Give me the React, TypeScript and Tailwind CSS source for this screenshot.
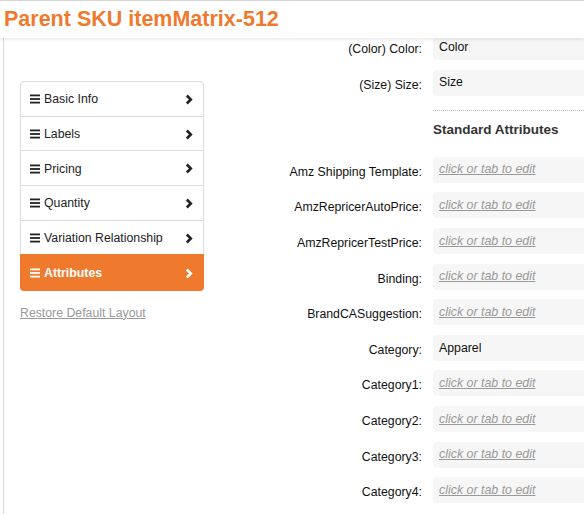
import React from "react";

const ORANGE = "text-[#ef7a2e]";

const NAV = ["Basic Info", "Labels", "Pricing", "Quantity", "Variation Relationship", "Attributes"];

type Field = { label: string; value?: string };

const TOP_FIELDS: Field[] = [
  { label: "(Color) Color:", value: "Color" },
  { label: "(Size) Size:", value: "Size" },
];

const STD_FIELDS: Field[] = [
  { label: "Amz Shipping Template:" },
  { label: "AmzRepricerAutoPrice:" },
  { label: "AmzRepricerTestPrice:" },
  { label: "Binding:" },
  { label: "BrandCASuggestion:" },
  { label: "Category:", value: "Apparel" },
  { label: "Category1:" },
  { label: "Category2:" },
  { label: "Category3:" },
  { label: "Category4:" },
];

function Bars() {
  return (
    <svg width="10" height="10" viewBox="0 0 10 10" className="shrink-0">
      <rect x="0" y="0.5" width="10" height="1.8" fill="currentColor" />
      <rect x="0" y="4.1" width="10" height="1.8" fill="currentColor" />
      <rect x="0" y="7.7" width="10" height="1.8" fill="currentColor" />
    </svg>
  );
}

function Chevron() {
  return (
    <svg width="8" height="11" viewBox="0 0 8 11" className="shrink-0">
      <polyline points="1.8,1.5 5.8,5.5 1.8,9.5" fill="none" stroke="currentColor" strokeWidth="2.6" />
    </svg>
  );
}

function Row({ f }: { f: Field }) {
  return (
    <>
      <div className="pt-[6px] text-right text-[12.3px] text-[#111]">{f.label}</div>
      <div className="flex h-[26px] items-center rounded-[4px] bg-[#f6f6f6] px-[6px] text-[12.3px]">
        {f.value ? (
          <span className="text-[#111]">{f.value}</span>
        ) : (
          <span className="text-[12.4px] italic text-[#999] underline">click or tab to edit</span>
        )}
      </div>
    </>
  );
}

export default function App() {
  return (
    <div className="relative h-[514px] w-[584px] overflow-hidden bg-white font-['Liberation_Sans',Arial,sans-serif]">
      <header className="absolute left-0 right-0 top-0 z-10 flex h-[38px] items-center border-t border-[#d4d4d4] bg-white pl-[4px] shadow-[0_2px_3px_rgba(0,0,0,0.08)]">
        <h1 className={`text-[21.5px] font-bold leading-none ${ORANGE}`}>Parent SKU itemMatrix-512</h1>
      </header>

      <div className="flex pt-[34px]">
        <aside className="ml-[3px] h-[480px] w-[217px] shrink-0 border-l border-[#dadada] pl-[16px] pt-[47px]">
          <nav className="w-[184px] rounded-[4px] border border-[#dcdcdc]">
            {NAV.map((n) => {
              const active = n === "Attributes";
              return (
                <div
                  key={n}
                  className={
                    active
                      ? "-m-px flex h-[36.2px] items-center gap-[4px] rounded-b-[4px] bg-[#ef7a2e] pl-[10px] pr-[11px] pt-px text-[12.3px] font-bold text-white"
                      : "flex h-[34.7px] items-center gap-[4px] border-b border-[#dcdcdc] pl-[9px] pr-[10px] pt-px text-[12.3px] text-[#222]"
                  }
                >
                  <Bars />
                  <span className="flex-1">{n}</span>
                  <Chevron />
                </div>
              );
            })}
          </nav>
          <a className="mt-[13px] block text-[12.3px] text-[#999] underline">Restore Default Layout</a>
        </aside>

        <main className="grid w-[390px] shrink-0 grid-cols-[202px_175px] content-start gap-x-[11px] gap-y-[9.6px]">
          {TOP_FIELDS.map((f) => (
            <Row key={f.label} f={f} />
          ))}
          <div />
          <div className="mt-[5px] border-t border-dotted border-[#bbb] pt-[10px] pb-[8px]">
            <h2 className="text-[13.5px] font-bold leading-[18px] text-[#333]">Standard Attributes</h2>
          </div>
          {STD_FIELDS.map((f) => (
            <Row key={f.label} f={f} />
          ))}
        </main>
      </div>
    </div>
  );
}
